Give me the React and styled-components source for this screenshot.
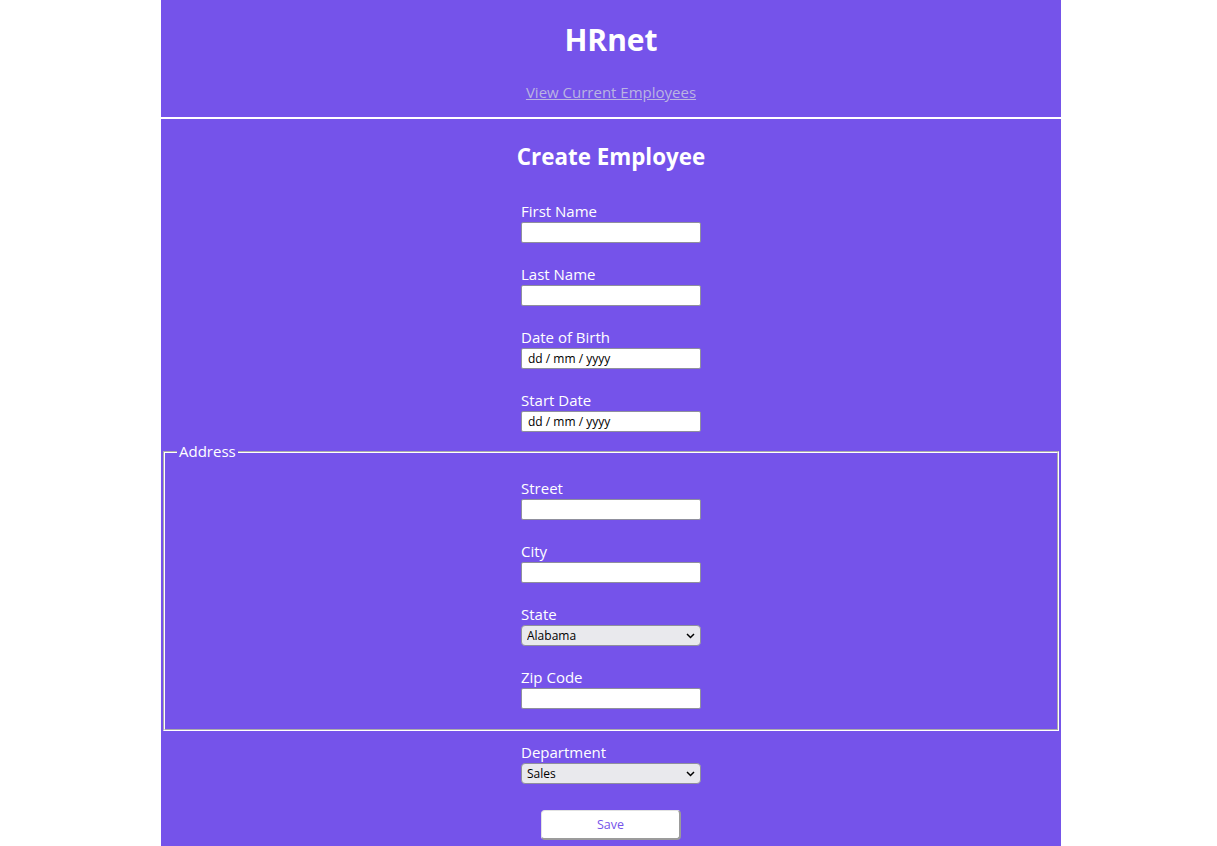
import React from 'react'
import styled, { createGlobalStyle } from 'styled-components'

const PURPLE = '#7553ea'

const GlobalStyle = createGlobalStyle`
  html, body {
    margin: 0;
    padding: 0;
    background: #fff;
  }
  body {
    padding-left: 5px;
    font-family: "Open Sans", "Noto Sans", sans-serif;
  }
`

const STATES = ['Alabama', 'Alaska', 'Arizona', 'Arkansas', 'California', 'Colorado']
const DEPARTMENTS = ['Sales', 'Marketing', 'Engineering', 'Human Resources', 'Legal']

const Page = styled.div`
  width: 900px;
  margin: 0 auto;
  background: ${PURPLE};
  color: #fff;
  padding-bottom: 20px;
`

const Header = styled.header`
  padding: 20px 0 14px;
  border-bottom: 2px solid #fff;
  text-align: center;
`

const Title = styled.h1`
  margin: 0;
  font-size: 30px;
  line-height: 40px;
  font-weight: 700;
`

const NavLink = styled.a`
  display: inline-block;
  margin-top: 22px;
  font-size: 15px;
  line-height: 21px;
  color: #bab4e2;
  text-decoration: underline;
`

const Section = styled.section`
  display: flex;
  flex-direction: column;
  align-items: center;
`

const SubTitle = styled.h2`
  margin: 22px 0 17px;
  font-size: 22.4px;
  line-height: 32px;
  font-weight: 700;
`

const Form = styled.form`
  width: 100%;
  display: flex;
  flex-direction: column;
  align-items: center;
`

const Field = styled.div`
  width: 180px;
  display: flex;
  flex-direction: column;
`

const Label = styled.label`
  margin-top: 11px;
  font-size: 15px;
  line-height: 21px;
`

const TextInput = styled.input`
  box-sizing: border-box;
  display: block;
  width: 180px;
  height: 21px;
  margin: 0 0 10px;
  padding: 0 6px;
  border: 1px solid #8f8f9d;
  border-radius: 2px;
  background: #fff;
  font-family: "Open Sans", sans-serif;
  font-size: 12px;
  color: #000;

  &::placeholder {
    color: #000;
    opacity: 1;
  }
`

const SelectWrap = styled.div`
  position: relative;
  width: 180px;
  height: 21px;
  margin-bottom: 10px;
`

const Select = styled.select`
  appearance: none;
  display: block;
  box-sizing: border-box;
  width: 100%;
  height: 21px;
  margin: 0;
  padding: 0 20px 0 5px;
  border: 1px solid #8f8f9d;
  border-radius: 4px;
  background: #e9e9ed;
  font-family: "Open Sans", sans-serif;
  font-size: 12px;
  color: #000;
`

const Chevron = styled.svg`
  position: absolute;
  right: 6px;
  top: 8px;
  pointer-events: none;
`

const Fieldset = styled.fieldset`
  box-sizing: border-box;
  width: calc(100% - 4px);
  margin: 0 2px;
  padding: 6px 12px 10px;
  border: 2px groove #fff;
  display: flex;
  flex-direction: column;
  align-items: center;
`

const Legend = styled.legend`
  padding: 0 2px;
  font-size: 15px;
  line-height: 19px;
`

const SaveButton = styled.button`
  box-sizing: border-box;
  width: 140px;
  height: 30px;
  margin-top: 16px;
  background: #fff;
  color: ${PURPLE};
  border: 1px solid #e2e2e2;
  border-right: 2px solid #9b9b9b;
  border-bottom: 2px solid #9b9b9b;
  border-radius: 4px;
  font-family: "Open Sans", sans-serif;
  font-size: 12.5px;
  cursor: pointer;
`

const InputField = ({ id, label, placeholder }) => (
  <Field>
    <Label htmlFor={id}>{label}</Label>
    <TextInput id={id} type="text" placeholder={placeholder} />
  </Field>
)

const SelectField = ({ id, label, options }) => (
  <Field>
    <Label htmlFor={id}>{label}</Label>
    <SelectWrap>
      <Select id={id} defaultValue={options[0]}>
        {options.map(o => <option key={o}>{o}</option>)}
      </Select>
      <Chevron width="9" height="6" viewBox="0 0 9 6">
        <path d="M1 1l3.5 3.5L8 1" fill="none" stroke="#000" strokeWidth="1.5" />
      </Chevron>
    </SelectWrap>
  </Field>
)

export default function App() {
  return (
    <>
      <GlobalStyle />
      <Page>
        <Header>
          <Title>HRnet</Title>
          <div>
            <NavLink href="#employees">View Current Employees</NavLink>
          </div>
        </Header>
        <Section>
          <SubTitle>Create Employee</SubTitle>
          <Form onSubmit={e => e.preventDefault()}>
            <InputField id="first-name" label="First Name" />
            <InputField id="last-name" label="Last Name" />
            <InputField id="date-of-birth" label="Date of Birth" placeholder="dd / mm / yyyy" />
            <InputField id="start-date" label="Start Date" placeholder="dd / mm / yyyy" />

            <Fieldset>
              <Legend>Address</Legend>
              <InputField id="street" label="Street" />
              <InputField id="city" label="City" />
              <SelectField id="state" label="State" options={STATES} />
              <InputField id="zip-code" label="Zip Code" />
            </Fieldset>

            <SelectField id="department" label="Department" options={DEPARTMENTS} />
            <SaveButton type="submit">Save</SaveButton>
          </Form>
        </Section>
      </Page>
    </>
  )
}
